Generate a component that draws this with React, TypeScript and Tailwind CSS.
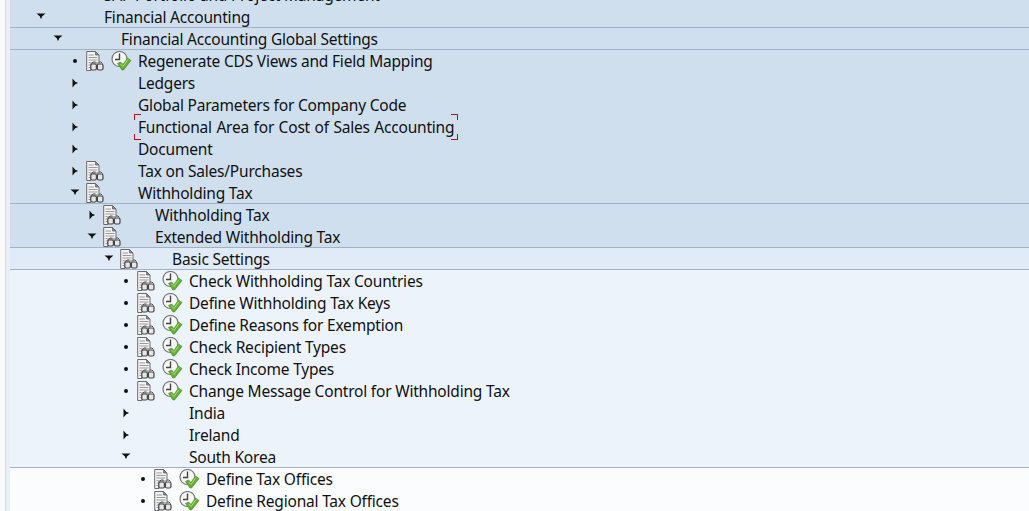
type Marker = 'down' | 'right' | 'dot'
type Tone = 'dark' | 'mid' | 'light' | 'pale'

interface Row {
  label: string
  level: number
  marker: Marker
  doc?: boolean
  clock?: boolean
  tone: Tone
  line?: boolean
  focus?: boolean
}

const ROWS: Row[] = [
  { label: 'SAP Portfolio and Project Management', level: 0, marker: 'right', tone: 'dark' },
  { label: 'Financial Accounting', level: 0, marker: 'down', tone: 'dark', line: true },
  { label: 'Financial Accounting Global Settings', level: 1, marker: 'down', tone: 'dark', line: true },
  { label: 'Regenerate CDS Views and Field Mapping', level: 2, marker: 'dot', doc: true, clock: true, tone: 'dark' },
  { label: 'Ledgers', level: 2, marker: 'right', tone: 'dark' },
  { label: 'Global Parameters for Company Code', level: 2, marker: 'right', tone: 'dark' },
  { label: 'Functional Area for Cost of Sales Accounting', level: 2, marker: 'right', tone: 'dark', focus: true },
  { label: 'Document', level: 2, marker: 'right', tone: 'dark' },
  { label: 'Tax on Sales/Purchases', level: 2, marker: 'right', doc: true, tone: 'dark' },
  { label: 'Withholding Tax', level: 2, marker: 'down', doc: true, tone: 'dark', line: true },
  { label: 'Withholding Tax', level: 3, marker: 'right', doc: true, tone: 'dark' },
  { label: 'Extended Withholding Tax', level: 3, marker: 'down', doc: true, tone: 'dark', line: true },
  { label: 'Basic Settings', level: 4, marker: 'down', doc: true, tone: 'mid', line: true },
  { label: 'Check Withholding Tax Countries', level: 5, marker: 'dot', doc: true, clock: true, tone: 'light' },
  { label: 'Define Withholding Tax Keys', level: 5, marker: 'dot', doc: true, clock: true, tone: 'light' },
  { label: 'Define Reasons for Exemption', level: 5, marker: 'dot', doc: true, clock: true, tone: 'light' },
  { label: 'Check Recipient Types', level: 5, marker: 'dot', doc: true, clock: true, tone: 'light' },
  { label: 'Check Income Types', level: 5, marker: 'dot', doc: true, clock: true, tone: 'light' },
  { label: 'Change Message Control for Withholding Tax', level: 5, marker: 'dot', doc: true, clock: true, tone: 'light' },
  { label: 'India', level: 5, marker: 'right', tone: 'light' },
  { label: 'Ireland', level: 5, marker: 'right', tone: 'light' },
  { label: 'South Korea', level: 5, marker: 'down', tone: 'light', line: true },
  { label: 'Define Tax Offices', level: 6, marker: 'dot', doc: true, clock: true, tone: 'pale' },
  { label: 'Define Regional Tax Offices', level: 6, marker: 'dot', doc: true, clock: true, tone: 'pale' },
]

const TONES: Record<Tone, string> = {
  dark: 'bg-[#cfdfee]',
  mid: 'bg-[#e1ebf7]',
  light: 'bg-[#edf3fb]',
  pale: 'bg-[#fafcfe]',
}

function TreeMarker({ kind }: { kind: Marker }) {
  if (kind === 'dot') {
    return <span className="block h-[4px] w-[4px] rounded-full bg-[#111]" />
  }
  if (kind === 'down') {
    return (
      <svg width="10" height="6" viewBox="0 0 10 6" className="mb-[2px]">
        <path d="M0.5 0.5H9.5L6 3.5L5.5 5.5H4.5L4 3.5Z" fill="#111" />
      </svg>
    )
  }
  return (
    <svg width="6" height="10" viewBox="0 0 6 10">
      <path d="M0.5 0.5L3.5 4L5.5 4.5V5.5L3.5 6L0.5 9.5Z" fill="#111" />
    </svg>
  )
}

function DocIcon() {
  return (
    <svg width="18" height="20" viewBox="0 0 18 20" className="shrink-0">
      <path d="M0.7 0.5H9.5L13 4V12H5V19.5H0.7Z" fill="#f4f4f4" stroke="#6a6a6a" />
      <path d="M9.5 0.5V4H13Z" fill="#8c8c8c" stroke="#666" strokeWidth="0.8" />
      <path d="M2.5 4H8M2.5 6.5H11.5M2.5 9H11.5M2.5 11.5H4.5M2.5 14H4.5M2.5 16.5H4.5" stroke="#999" strokeWidth="1.1" />
      <path d="M5.5 12.5L7 11H9.5M16.5 12.5L15 11H13" stroke="#555" fill="none" />
      <rect x="4.8" y="13" width="5.6" height="6" rx="1.5" fill="#e6e6e6" stroke="#444" strokeWidth="1.2" />
      <rect x="11.4" y="13" width="5.6" height="6" rx="1.5" fill="#e6e6e6" stroke="#444" strokeWidth="1.2" />
    </svg>
  )
}

function ClockIcon() {
  return (
    <svg width="21" height="20" viewBox="0 0 21 20" className="ml-[7px] shrink-0">
      <circle cx="8.5" cy="8" r="7.5" fill="#f7f7f7" stroke="#777" strokeWidth="1.2" />
      <path d="M8.5 2.5V8.5H4" fill="none" stroke="#444" strokeWidth="1.4" />
      <path d="M6.5 12.5L9.5 11L12 13.5L16.5 7L20 9.5L12.5 19H11Z" fill="#63ad35" stroke="#4a9326" strokeWidth="0.7" />
      <path d="M9.5 13L12 15.5L17 8.5" fill="none" stroke="#aee07a" strokeWidth="1" />
    </svg>
  )
}

function FocusCorners() {
  return (
    <>
      <span className="absolute left-[-4px] top-[-4px] h-[6px] w-[7px] border-l border-t border-[#b0121b]" />
      <span className="absolute right-[-4px] top-[-4px] h-[6px] w-[7px] border-r border-t border-[#b0121b]" />
      <span className="absolute bottom-[-4px] left-[-4px] h-[6px] w-[7px] border-b border-l border-[#b0121b]" />
      <span className="absolute bottom-[-4px] right-[-4px] h-[6px] w-[7px] border-b border-r border-[#b0121b]" />
    </>
  )
}

function TreeRow({ row }: { row: Row }) {
  return (
    <div
      className={`flex h-[22px] items-center ${TONES[row.tone]} ${row.line ? 'border-b border-[#9fb2c6]' : ''}`}
      style={{ paddingLeft: 23 + row.level * 17 }}
    >
      <div className="flex h-[22px] w-[16px] shrink-0 items-center justify-center">
        <TreeMarker kind={row.marker} />
      </div>
      <div className="flex w-[55px] shrink-0 items-center pl-[3px]">
        {row.doc && <DocIcon />}
        {row.clock && <ClockIcon />}
      </div>
      <span
        className={`relative whitespace-nowrap text-[15.5px] leading-[18px] tracking-[-0.2px] text-[#111] ${row.focus ? '[word-spacing:0.7px]' : ''}`}
      >
        {row.label}
        {row.focus && <FocusCorners />}
      </span>
    </div>
  )
}

export default function App() {
  return (
    <div className="flex h-[511px] w-[1029px] overflow-hidden bg-white font-['Noto_Sans','Open_Sans',sans-serif]">
      <div className="h-full w-[5px] shrink-0 bg-[#fafafa]" />
      <div className="h-full w-[5px] shrink-0 border-l border-[#d8d8d8] bg-[#e9eff7]" />
      <div className="min-w-0 flex-1 -mt-[16px]">
        {ROWS.map((row, i) => (
          <TreeRow key={i} row={row} />
        ))}
      </div>
    </div>
  )
}
